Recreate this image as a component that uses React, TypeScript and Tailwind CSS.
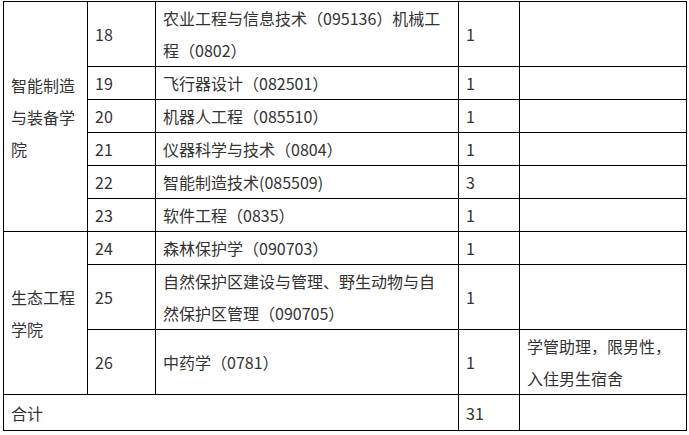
const rows1 = [
  { no: "18", name: "农业工程与信息技术（095136）机械工程（0802）", n: "1", h: "h-[65px]" },
  { no: "19", name: "飞行器设计（082501）", n: "1", h: "h-[33px]" },
  { no: "20", name: "机器人工程（085510）", n: "1", h: "h-[33px]" },
  { no: "21", name: "仪器科学与技术（0804）", n: "1", h: "h-[33px]" },
  { no: "22", name: "智能制造技术(085509)", n: "3", h: "h-[33px]" },
  { no: "23", name: "软件工程（0835）", n: "1", h: "h-[33px]" },
];

const rows2 = [
  { no: "24", name: "森林保护学（090703）", n: "1", note: "", h: "h-[33px]" },
  { no: "25", name: "自然保护区建设与管理、野生动物与自然保护区管理（090705）", n: "1", note: "", h: "h-[65px]" },
  { no: "26", name: "中药学（0781）", n: "1", note: "学管助理，限男性，入住男生宿舍", h: "h-[65px]" },
];

const td = "border border-black px-[7px] py-0 align-middle";

export default function App() {
  return (
    <div className="min-h-[435px] w-[689px] bg-white pl-[3px] pt-[1px]">
      <table
        className="table-fixed border-collapse text-[16px] leading-[32px] text-[#333]"
        style={{ width: 683, fontFamily: '"Noto Sans CJK SC", "Noto Sans", sans-serif' }}
      >
        <colgroup>
          <col className="w-[84px]" />
          <col className="w-[68px]" />
          <col className="w-[303px]" />
          <col className="w-[61px]" />
          <col className="w-[167px]" />
        </colgroup>
        <tbody>
          {rows1.map((r, i) => (
            <tr key={r.no} className={r.h}>
              {i === 0 && (
                <td rowSpan={6} className={td}>
                  智能制造与装备学院
                </td>
              )}
              <td className={td}>{r.no}</td>
              <td className={`${td} pr-[12px]`}>{r.name}</td>
              <td className={td}>{r.n}</td>
              <td className={td}></td>
            </tr>
          ))}
          {rows2.map((r, i) => (
            <tr key={r.no} className={r.h}>
              {i === 0 && (
                <td rowSpan={3} className={td}>
                  生态工程学院
                </td>
              )}
              <td className={td}>{r.no}</td>
              <td className={`${td} pr-[12px]`}>{r.name}</td>
              <td className={td}>{r.n}</td>
              <td className={td}>{r.note}</td>
            </tr>
          ))}
          <tr className="h-[36px]">
            <td colSpan={3} className={td}>
              合计
            </td>
            <td className={td}>31</td>
            <td className={td}></td>
          </tr>
        </tbody>
      </table>
    </div>
  );
}
